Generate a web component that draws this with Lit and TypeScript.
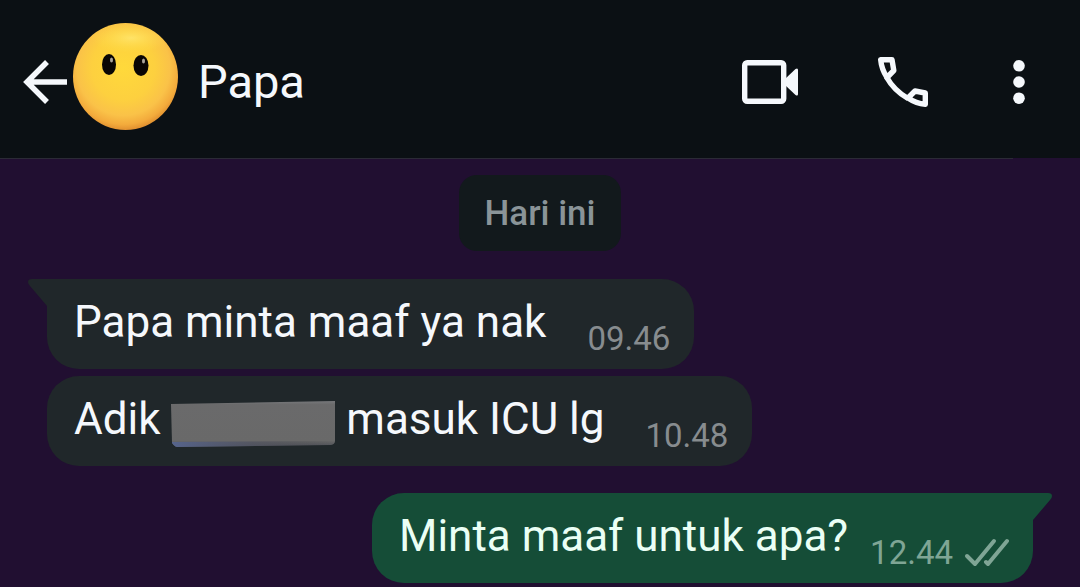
import { LitElement, html, css, nothing } from "lit";
import { customElement, property } from "lit/decorators.js";

interface Message {
  before: string;
  after?: string;
  time: string;
  outgoing?: boolean;
  tail?: boolean;
}

const messages: Message[] = [
  { before: "Papa minta maaf ya nak", time: "09.46", tail: true },
  { before: "Adik ", after: " masuk ICU lg", time: "10.48" },
  { before: "Minta maaf untuk apa?", time: "12.44", outgoing: true, tail: true },
];

const redaction = html`<svg class="redaction" viewBox="0 0 164 46" width="164" height="46" role="img" aria-label="nama disensor">
    <defs>
      <linearGradient id="bar" x1="0" y1="0" x2="0" y2="1">
        <stop offset="0" stop-color="#77787b" />
        <stop offset="0.08" stop-color="#6a6a6b" />
        <stop offset="0.86" stop-color="#696969" />
        <stop offset="0.92" stop-color="#5c5d60" />
        <stop offset="1" stop-color="#4a4d57" />
      </linearGradient>
      <linearGradient id="edge" x1="0" y1="0" x2="1" y2="0">
        <stop offset="0" stop-color="#56648c" />
        <stop offset="0.5" stop-color="#505361" stop-opacity="0.7" />
        <stop offset="1" stop-color="#4a4a4c" stop-opacity="0" />
      </linearGradient>
    </defs>
    <path fill="url(#bar)" d="M0 3 164 0V40Q164 43 160 44L6 46Q4 46 1 42Z" />
    <path fill="url(#edge)" d="M1 41 163 40Q163 43 160 44L6 46Q4 46 1 42Z" />
  </svg>`;

@customElement("chat-bubble")
class ChatBubble extends LitElement {
  @property({ attribute: false }) message!: Message;

  static styles = css`
    :host { display: flex; }
    .bubble {
      position: relative;
      display: flex;
      gap: 41px;
      padding: 13px 24px 10px 27px;
      border-radius: 32px;
      background: #20272a;
      color: #f5f8fc;
    }
    .outgoing {
      gap: 22px;
      margin-left: auto;
      background: #154d37;
      color: #eafff5;
    }
    .tail-left { border-top-left-radius: 0; }
    .tail-right { border-top-right-radius: 0; }
    .tail { position: absolute; top: 0; fill: #20272a; }
    .tail-left .tail { right: calc(100% - 1px); }
    .tail-right .tail { left: calc(100% - 1px); fill: #154d37; transform: scaleX(-1); }
    .text {
      margin: 0;
      padding-bottom: 7px;
      font-size: 44px;
      line-height: 60px;
      white-space: pre-wrap;
    }
    .redaction { margin-top: -20px; vertical-align: -13px; }
    .meta {
      display: flex;
      align-items: center;
      align-self: flex-end;
      gap: 11px;
      font-size: 33px;
      line-height: 40px;
      color: #878c8f;
    }
    .outgoing .meta { color: #7fa595; }
  `;

  render() {
    const m = this.message;
    const tail = m.tail ? (m.outgoing ? "tail-right" : "tail-left") : "";
    return html`<div class="bubble ${m.outgoing ? "outgoing" : ""} ${tail}">
      ${m.tail
        ? html`<svg class="tail" width="20" height="28" viewBox="0 0 20 28" aria-hidden="true">
            <path d="M20 0H4Q0 0 0 3Q0 5 2 7L19 27V28H20Z" />
          </svg>`
        : nothing}
      <p class="text">${m.before}${m.after ? html`${redaction}${m.after}` : nothing}</p>
      <span class="meta">
        <time>${m.time}</time>
        ${m.outgoing
          ? html`<svg width="45" height="30" viewBox="0 0 45 30" role="img" aria-label="Terkirim"
              fill="none" stroke="currentColor" stroke-width="4" stroke-linecap="round" stroke-linejoin="round">
              <path d="M3 18 11 26 30 3" />
              <path d="M22 24 24 26 43 3" />
            </svg>`
          : nothing}
      </span>
    </div>`;
  }
}

@customElement("app-root")
class AppRoot extends LitElement {
  static styles = css`
    :host {
      display: flex;
      flex-direction: column;
      min-height: 100vh;
      box-sizing: border-box;
      overflow: hidden;
      background: #210f31;
      font-family: Roboto, "Noto Sans", sans-serif;
    }
    .header {
      display: flex;
      align-items: center;
      padding: 23px 55px 28px 23px;
      background: #0b1014;
      color: #f5f8fc;
    }
    .rule {
      height: 1px;
      margin-right: 67px;
      background: #2b2a36;
    }
    button {
      display: block;
      padding: 0;
      border: 0;
      background: none;
      color: inherit;
      cursor: pointer;
    }
    svg { display: block; }
    .back { margin: 11px 6px 0 0; }
    .name {
      margin: 10px 0 0 20px;
      font-size: 47px;
      line-height: 56px;
      font-weight: 400;
    }
    .actions {
      display: flex;
      align-items: center;
      gap: 80px;
      margin: 11px 0 0 auto;
    }
    .more { margin-left: 5px; }
    .thread {
      display: flex;
      flex-direction: column;
      padding: 16px 47px 4px;
    }
    .day {
      align-self: center;
      margin-bottom: 28px;
      padding: 19px 25px 17px;
      border-radius: 18px;
      background: #12191c;
      color: #8a9498;
      font-size: 35px;
      line-height: 40px;
      font-weight: 500;
    }
    .incoming { margin-bottom: 7px; }
    .reply { margin-top: 20px; }
  `;

  render() {
    return html`
      <header class="header">
        <button class="back" aria-label="Kembali">
          <svg width="44" height="44" viewBox="0 0 44 44" fill="none" stroke="currentColor" stroke-width="5.500">
            <path d="M44 22H4M24 2 4 22 24 42" />
          </svg>
        </button>
        <svg width="105" height="107" viewBox="0 0 105 107" role="img" aria-label="Foto profil">
          <defs>
            <radialGradient id="face" cx="0.48" cy="0.42" r="0.6">
              <stop offset="0" stop-color="#ffd93b" />
              <stop offset="0.5" stop-color="#fdd03f" />
              <stop offset="0.74" stop-color="#fac248" />
              <stop offset="0.88" stop-color="#f3ab3c" />
              <stop offset="1" stop-color="#da862b" />
            </radialGradient>
            <radialGradient id="shine">
              <stop offset="0" stop-color="#ffe56c" stop-opacity="0.9" />
              <stop offset="1" stop-color="#ffdc45" stop-opacity="0" />
            </radialGradient>
            <clipPath id="disc">
              <ellipse cx="52.500" cy="53.500" rx="52.500" ry="53.500" />
            </clipPath>
          </defs>
          <ellipse cx="52.500" cy="53.500" rx="52.500" ry="53.500" fill="url(#face)" />
          <g clip-path="url(#disc)">
            <ellipse cx="58" cy="15" rx="40" ry="15" fill="url(#shine)" />
          </g>
          <ellipse cx="36" cy="41.500" rx="7" ry="10.500" fill="#090604" />
          <ellipse cx="68" cy="42.500" rx="7.500" ry="10.500" fill="#090604" />
          <ellipse cx="38.500" cy="37" rx="1.500" ry="2.500" fill="#aaa49a" />
          <ellipse cx="70.500" cy="38" rx="1.500" ry="2.500" fill="#aaa49a" />
        </svg>
        <h1 class="name">Papa</h1>
        <div class="actions">
          <button aria-label="Panggilan video">
            <svg width="56" height="44" viewBox="0 0 56 44">
              <rect x="2.700" y="2.700" width="39" height="38.600" rx="2.500" fill="none" stroke="currentColor" stroke-width="5.400" />
              <path fill="currentColor" d="M43 19 53.500 9Q56 7.500 56 10V34Q56 36.500 53.500 35L43 25Z" />
            </svg>
          </button>
          <button aria-label="Panggilan suara">
            <svg width="50" height="50" viewBox="0 0 50 50" fill="none" stroke="currentColor" stroke-width="5.400" stroke-linejoin="round">
              <path d="M2.700 2.700H14L15.800 13.500 9 20.500Q3.500 12 2.700 2.700Z" />
              <path d="M47.300 47.300V36L37 34 30 41Q38 46.500 47.300 47.300Z" />
              <path d="M8.500 20Q16 33.500 30 41.500" />
            </svg>
          </button>
          <button class="more" aria-label="Opsi lainnya">
            <svg width="12" height="44" viewBox="0 0 12 44" fill="currentColor">
              <circle cx="6" cy="5.800" r="5.800" />
              <circle cx="6" cy="22" r="5.800" />
              <circle cx="6" cy="38.200" r="5.800" />
            </svg>
          </button>
        </div>
      </header>
      <div class="rule"></div>
      <main class="thread">
        <div class="day">Hari ini</div>
        ${messages.map(
          (m) => html`<chat-bubble class=${m.outgoing ? "reply" : "incoming"} .message=${m}></chat-bubble>`
        )}
      </main>
    `;
  }
}
